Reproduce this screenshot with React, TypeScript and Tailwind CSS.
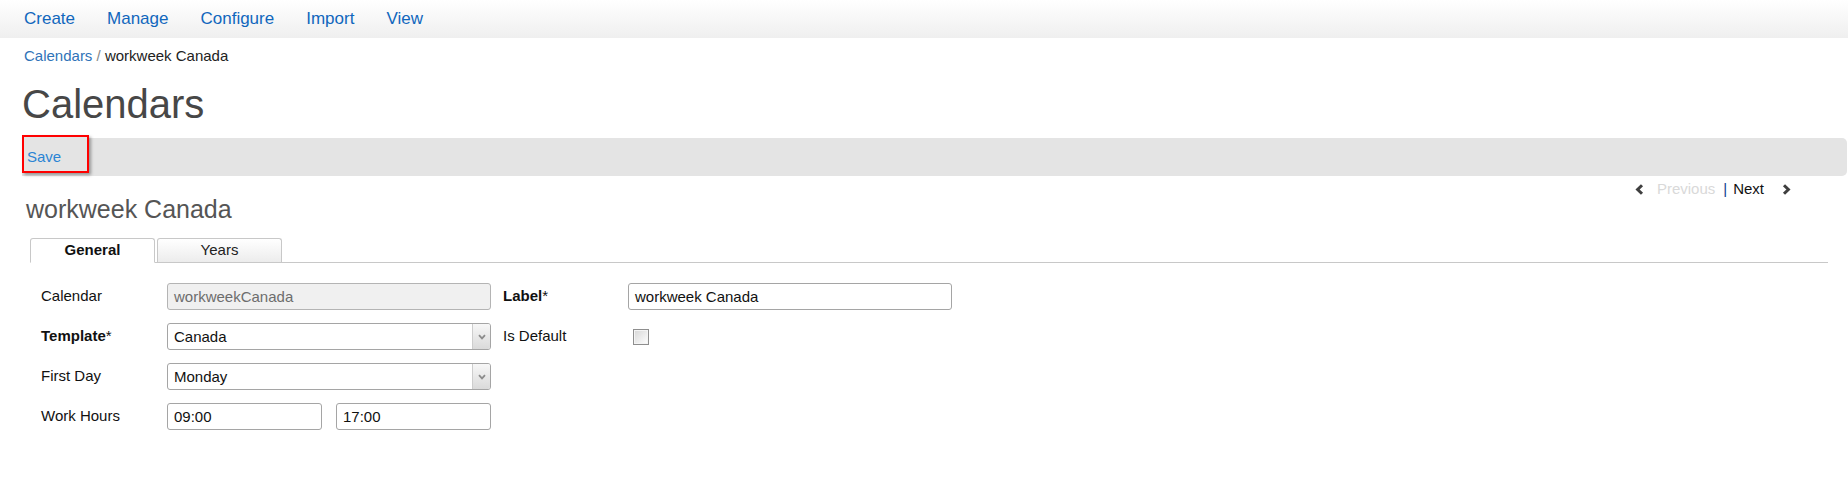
import React from "react";

const navItems = ["Create", "Manage", "Configure", "Import", "View"];

function ChevronLeft() {
  return (
    <svg width="9" height="11" viewBox="0 0 9 11">
      <path d="M7 1.2 L2.6 5.5 L7 9.8" fill="none" stroke="#3f3f3f" strokeWidth="3" />
    </svg>
  );
}

function ChevronRight() {
  return (
    <svg width="9" height="11" viewBox="0 0 9 11">
      <path d="M2 1.2 L6.4 5.5 L2 9.8" fill="none" stroke="#3f3f3f" strokeWidth="3" />
    </svg>
  );
}

function TextInput({ value, width = "w-[324px]", disabled = false }: { value: string; width?: string; disabled?: boolean }) {
  return (
    <div
      className={`${width} h-[27px] rounded-[3px] border pl-[6px] text-[15px] leading-[25px] ${
        disabled ? "border-[#b4b4b4] bg-[#f0f0f0] text-[#6d6d6d]" : "border-[#a5a5a5] bg-white text-[#111]"
      }`}
    >
      {value}
    </div>
  );
}

function SelectBox({ value }: { value: string }) {
  return (
    <div className="flex h-[27px] w-[324px] items-stretch rounded-[3px] border border-[#a5a5a5] bg-white">
      <span className="flex-1 pl-[6px] text-[15px] leading-[25px] text-[#111]">{value}</span>
      <span className="flex w-[18px] items-center justify-center rounded-r-[2px] border-l border-[#cdcdcd] bg-linear-to-b from-[#f7f7f7] to-[#dadada]">
        <svg width="8" height="6" viewBox="0 0 8 6">
          <path d="M1 1.2 L4 4.4 L7 1.2" fill="none" stroke="#8c8c8c" strokeWidth="1.8" />
        </svg>
      </span>
    </div>
  );
}

function Label({ children }: { children: React.ReactNode }) {
  return <div className="w-[126px] shrink-0 text-[15px] text-[#111]">{children}</div>;
}

export default function App() {
  return (
    <div className="min-h-[497px] bg-white font-['Liberation_Sans',Arial,sans-serif]">
      <nav className="flex h-[38px] items-center gap-[32px] bg-linear-to-b from-white to-[#efefef] pl-6">
        {navItems.map((item) => (
          <a key={item} className="text-[17px] text-[#1167bd]">
            {item}
          </a>
        ))}
      </nav>

      <div className="pl-[22px] pr-px">
        <div className="ml-[2px] mt-2 text-[15px] leading-5">
          <a className="text-[#2f73b8]">Calendars</a>
          <span className="text-[#888]"> / </span>
          <span className="text-[#222]">workweek Canada</span>
        </div>

        <h1 className="mt-4 text-[40px] leading-[44px] text-[#474747]">Calendars</h1>

        <div className="mt-3 flex h-[38px] rounded-r-[5px] bg-[#e4e4e4]">
          <button className="-mt-[3px] flex h-[38px] w-[67px] items-center border-2 border-[#ff0000] bg-[#e4e4e4] pl-[3px] pt-[7px] text-[15px] text-[#2b84d4] shadow-[2px_2px_3px_rgba(0,0,0,0.35)]">
            Save
          </button>
        </div>

        <div className="flex items-start justify-between">
          <h2 className="ml-[4px] pt-[18px] text-[25px] leading-[30px] text-[#555]">workweek Canada</h2>
          <div className="flex items-center pr-[56px] pt-[3px] text-[15px] leading-5">
            <ChevronLeft />
            <span className="ml-[13px] text-[#d9d9d9]">Previous</span>
            <span className="ml-[8px] text-[#0b3f8f]">|</span>
            <span className="ml-[6px] text-[#111]">Next</span>
            <span className="ml-[18px]">
              <ChevronRight />
            </span>
          </div>
        </div>

        <div className="ml-[8px] mr-[19px] mt-[14px] flex gap-[2px] border-b border-[#c8c8c8]">
          <div className="-mb-px flex h-[25px] w-[125px] items-center justify-center rounded-t-[3px] border border-b-white border-[#c8c8c8] bg-white text-[15px] font-bold text-[#111]">
            General
          </div>
          <div className="flex h-[24px] w-[125px] items-center justify-center rounded-t-[3px] border border-b-0 border-[#c8c8c8] bg-linear-to-b from-white to-[#ececec] text-[15px] text-[#222]">
            Years
          </div>
        </div>

        <div className="ml-[19px] mt-[20px] flex flex-col gap-[13px]">
          <div className="flex items-center">
            <Label>Calendar</Label>
            <TextInput value="workweekCanada" disabled />
            <div className="ml-[12px] w-[125px] text-[15px] text-[#111]">
              <b>Label</b>*
            </div>
            <TextInput value="workweek Canada" />
          </div>
          <div className="flex items-center">
            <Label>
              <b>Template</b>*
            </Label>
            <SelectBox value="Canada" />
            <div className="ml-[12px] w-[125px] text-[15px] text-[#111]">Is Default</div>
            <span className="ml-[5px] h-[16px] w-[16px] border border-[#8e8e8e] bg-linear-to-br from-[#d6d6d6] to-white shadow-[inset_0_0_0_1px_#f4f4f4]" />
          </div>
          <div className="flex items-center">
            <Label>First Day</Label>
            <SelectBox value="Monday" />
          </div>
          <div className="flex items-center">
            <Label>Work Hours</Label>
            <TextInput value="09:00" width="w-[155px]" />
            <div className="ml-[14px]">
              <TextInput value="17:00" width="w-[155px]" />
            </div>
          </div>
        </div>
      </div>
    </div>
  );
}
